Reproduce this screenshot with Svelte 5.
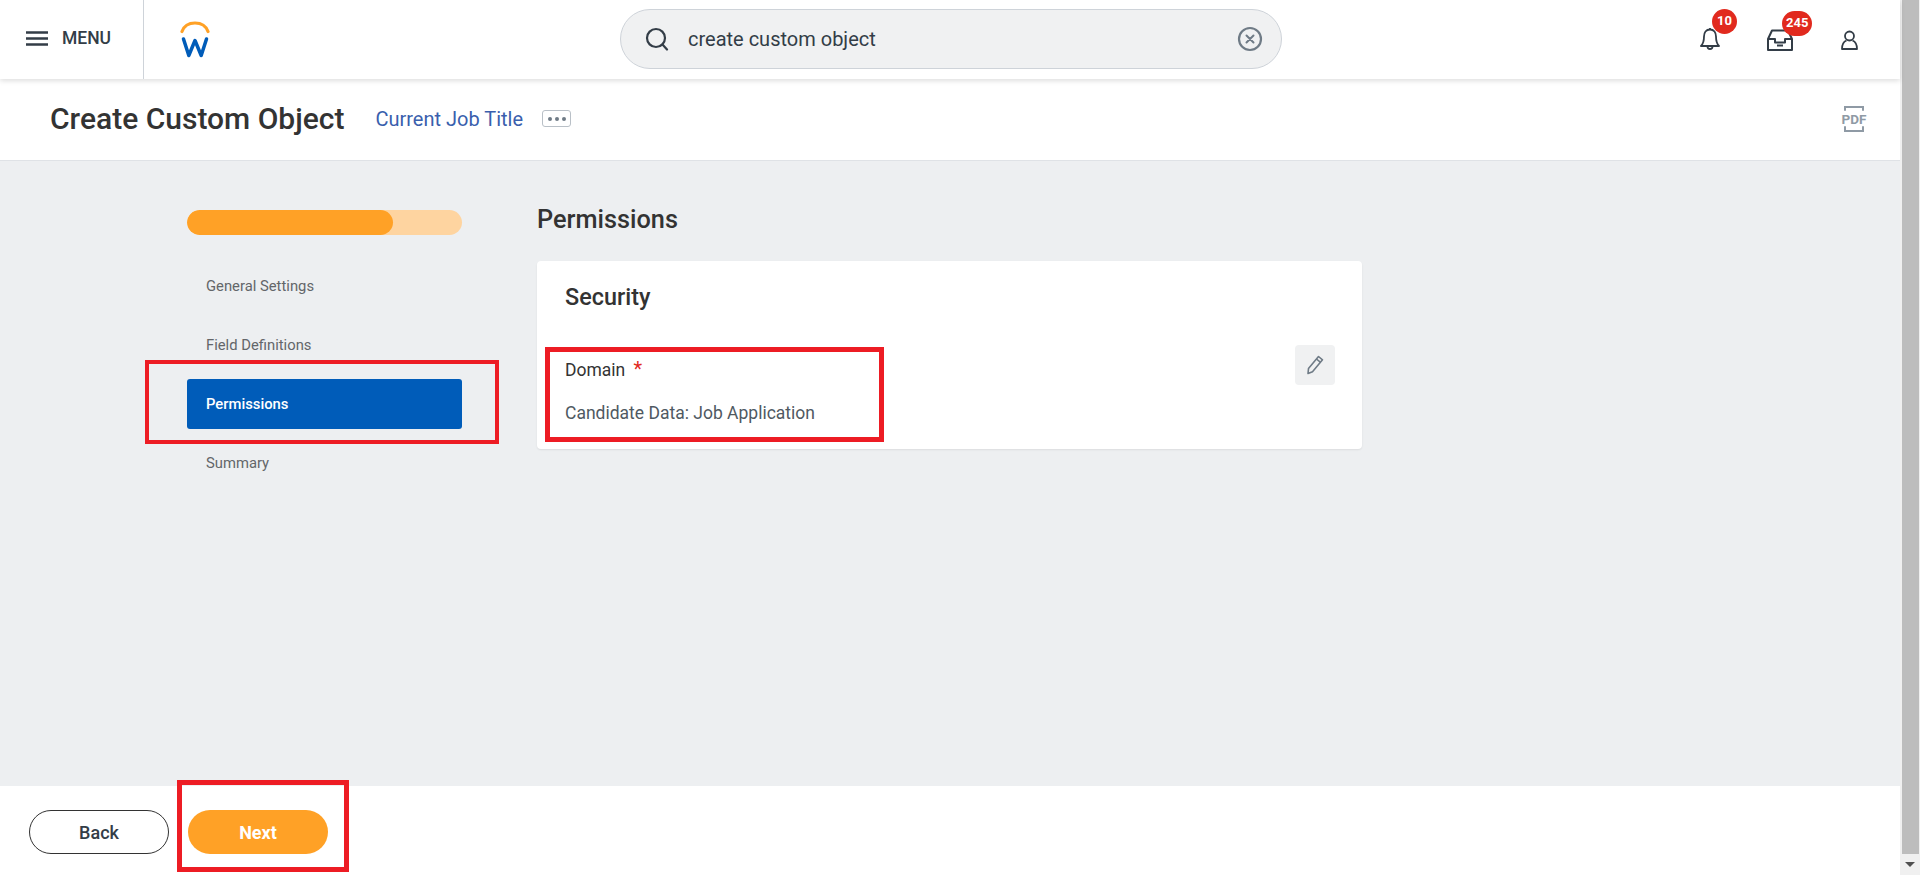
<script lang="ts">
	const steps = ['General Settings', 'Field Definitions', 'Permissions', 'Summary'];
	const active = 'Permissions';
	const progress = 75;
</script>

<div class="window">
	<div class="page">
		<header class="topbar">
			<button class="menu">
				<svg width="22" height="15" viewBox="0 0 22 15">
					<path d="M0 1.5h22M0 7.5h22M0 13.5h22" stroke="#333d47" stroke-width="2.4" />
				</svg>
				<span>MENU</span>
			</button>
			<div class="logo">
				<svg width="30" height="37" viewBox="0 0 30 37" fill="none">
					<path d="M2 10.5C4 5 9 2 15 2s11 3 13 8.500" stroke="#ffa126" stroke-width="3.200" stroke-linecap="round" />
					<path d="M3.500 18 8.800 34.500 15 19.500l6.200 15 5.300-16.500" stroke="#005cb9" stroke-width="3.500" stroke-linejoin="round" stroke-linecap="round" />
				</svg>
			</div>
			<div class="search">
				<svg width="24" height="24" viewBox="0 0 24 24" fill="none" stroke="#333d47" stroke-width="2.200">
					<circle cx="11" cy="11" r="9" />
					<path d="M17.500 17.500 22 22.500" stroke-linecap="round" />
				</svg>
				<span class="query">create custom object</span>
				<svg class="clear" width="26" height="26" viewBox="0 0 26 26" fill="none" stroke="#6f7b86">
					<circle cx="13" cy="13" r="11" stroke-width="2.200" />
					<path d="M9.500 9.500l7 7M16.500 9.500l-7 7" stroke-width="2" stroke-linecap="round" />
				</svg>
			</div>
			<div class="actions">
				<div class="action bell">
					<svg width="20" height="26" viewBox="0 0 20 26" fill="none" stroke="#333d47" stroke-width="1.800" stroke-linejoin="round">
						<path d="M10 2.500c-4 0-6 3-6 7 0 5-1 7.500-3 9.500h18c-2-2-3-4.500-3-9.500 0-4-2-7-6-7z" />
						<path d="M10 1v1.500M7.500 19.500a2.500 2.500 0 0 0 5 0" />
					</svg>
					<span class="badge">10</span>
				</div>
				<div class="action inbox">
					<svg width="26" height="22" viewBox="0 0 26 22" fill="none" stroke="#333d47" stroke-width="2" stroke-linejoin="round">
						<path d="M1 10 5 1.500h16L25 10v11H1z" />
						<path d="M1 10h7v3.500h10V10h7" />
						<path d="M10 16.500h6" />
					</svg>
					<span class="badge">245</span>
				</div>
				<div class="action user">
					<svg width="17" height="20" viewBox="0 0 17 20" fill="none" stroke="#333d47" stroke-width="1.800" stroke-linejoin="round">
						<circle cx="8.500" cy="6" r="4.500" />
						<path d="M5.500 10.500C3 11.500 1 13.500 1 19h15c0-5.500-2-7.500-4.500-8.500" />
					</svg>
				</div>
			</div>
		</header>

		<section class="titlebar">
			<h1>Create Custom Object</h1>
			<a class="job" href="#job">Current Job Title</a>
			<button class="more" aria-label="More"><i></i><i></i><i></i></button>
			<div class="pdf">
				<span>PDF</span>
			</div>
		</section>

		<main class="content">
			<nav class="steps">
				<div class="bar"><div class="fill" style="width: {progress}%"></div></div>
				{#each steps as step}
					<div class="step" class:current={step === active}>
						{step}
						{#if step === active}<div class="mark mark-step"></div>{/if}
					</div>
				{/each}
			</nav>
			<div class="form">
				<h2>Permissions</h2>
				<div class="card">
					<h3>Security</h3>
					<div class="field">
						<div class="field-text">
							<div class="label">Domain <span class="req">*</span></div>
							<div class="value">Candidate Data: Job Application</div>
							<div class="mark mark-field"></div>
						</div>
						<button class="edit" aria-label="Edit">
							<svg width="20" height="20" viewBox="0 0 20 20" fill="none" stroke="#6f7b86" stroke-width="1.600" stroke-linejoin="round">
								<path d="M3 18.500 3.500 13.500 13.500 1.500l4 3.300L7.500 16.700z" />
								<path d="M11.500 4 15.500 7.300" />
							</svg>
						</button>
					</div>
				</div>
			</div>
		</main>

		<footer class="footer">
			<button class="btn back">Back</button>
			<button class="btn next">
				Next
				<div class="mark mark-next"></div>
			</button>
		</footer>
	</div>

	<div class="scrollbar">
		<div class="thumb"></div>
		<div class="arrow"></div>
	</div>
</div>

<style>
	:global(body) {
		font-family: Roboto, 'Liberation Sans', sans-serif;
		color: #333;
	}

	button {
		font-family: inherit;
		background: none;
		border: none;
		padding: 0;
	}

	.window {
		display: flex;
		height: 875px;
		overflow: hidden;
		background: #f0f0f0;
	}

	.page {
		flex: 1;
		display: flex;
		flex-direction: column;
		min-width: 0;
		background: #fff;
	}

	.topbar {
		position: relative;
		z-index: 2;
		flex: 0 0 79px;
		display: flex;
		align-items: stretch;
		background: #fff;
		box-shadow: 0 2px 5px rgba(0, 0, 0, 0.13);
	}

	.menu {
		display: flex;
		align-items: center;
		gap: 14px;
		width: 117px;
		padding: 0 0 3px 26px;
		border-right: 1px solid #ced3d9;
		box-sizing: content-box;
		color: #333d47;
		font-size: 17.5px;
		font-weight: 500;
	}

	.logo {
		display: flex;
		align-items: center;
		margin-left: 36px;
		padding-bottom: 1px;
	}

	.search {
		display: flex;
		align-items: center;
		width: 662px;
		height: 60px;
		margin: 9px 0 0 410px;
		padding: 0 18px 0 24px;
		box-sizing: border-box;
		background: #f0f1f2;
		border: 1px solid #ced3d9;
		border-radius: 30px;
	}

	.query {
		margin-left: 19px;
		font-size: 20px;
		color: #333d47;
	}

	.clear {
		margin-left: auto;
	}

	.actions {
		flex: 1;
		display: flex;
		align-items: center;
		padding: 0 0 0 418px;
	}

	.action {
		position: relative;
		display: flex;
	}

	.inbox {
		margin-left: 47px;
	}

	.user {
		margin-left: 48px;
	}

	.badge {
		position: absolute;
		top: -18px;
		left: 12px;
		min-width: 25px;
		height: 25px;
		padding: 0 4px;
		box-sizing: border-box;
		border-radius: 13px;
		background: #e12a1e;
		color: #fff;
		font-size: 13px;
		font-weight: 700;
		line-height: 24px;
		text-align: center;
	}

	.inbox .badge {
		left: 15px;
	}

	.titlebar {
		flex: 0 0 82px;
		display: flex;
		align-items: center;
		padding: 0 36px 2px 50px;
		box-sizing: border-box;
		background: #fff;
		border-bottom: 1px solid #dfe2e6;
	}

	h1 {
		margin: 0;
		font-size: 30px;
		font-weight: 500;
		color: #333;
	}

	.job {
		margin-left: 31px;
		font-size: 20px;
		color: #3a5fad;
		text-decoration: none;
	}

	.more {
		display: flex;
		align-items: center;
		justify-content: center;
		gap: 3px;
		width: 29px;
		height: 17px;
		margin-left: 19px;
		border: 1px solid #b9c0c7;
		border-radius: 3px;
	}

	.more i {
		width: 4px;
		height: 4px;
		border-radius: 50%;
		background: #6f7b86;
	}

	.pdf {
		margin-left: auto;
		position: relative;
		width: 20px;
		height: 26px;
		display: flex;
		align-items: center;
		justify-content: center;
		border: 2px solid #8f9aa5;
		border-width: 2px 0;
		box-sizing: border-box;
	}

	.pdf::before {
		content: '';
		position: absolute;
		inset: -2px 0;
		border-left: 2px solid #8f9aa5;
		border-right: 2px solid #8f9aa5;
		clip-path: polygon(0 0, 100% 0, 100% 20%, 0 20%, 0 80%, 100% 80%, 100% 100%, 0 100%);
	}

	.pdf span {
		position: relative;
		color: #8f9aa5;
		font-size: 13.500px;
		font-weight: 700;
	}

	.content {
		flex: 1;
		display: flex;
		gap: 75px;
		padding: 49px 0 0 187px;
		background: #edeff1;
	}

	.steps {
		flex: 0 0 275px;
		display: flex;
		flex-direction: column;
		gap: 9px;
	}

	.bar {
		height: 25px;
		margin-bottom: 17px;
		border-radius: 13px;
		background: #fed4a0;
		overflow: hidden;
	}

	.fill {
		height: 100%;
		border-radius: 13px;
		background: #ffa126;
	}

	.step {
		position: relative;
		height: 50px;
		display: flex;
		align-items: center;
		padding-left: 19px;
		border-radius: 3px;
		font-size: 14.8px;
		color: #636669;
	}

	.step.current {
		background: #005cb9;
		color: #fff;
		font-weight: 500;
	}

	.form {
		flex: 0 0 825px;
	}

	h2 {
		margin: 0;
		height: 51px;
		line-height: 20px;
		font-size: 25.300px;
		font-weight: 500;
		color: #333;
	}

	.card {
		height: 188px;
		padding: 18px 27px 0 28px;
		box-sizing: border-box;
		background: #fff;
		border-radius: 4px;
		box-shadow: 0 1px 2px rgba(0, 0, 0, 0.08);
	}

	h3 {
		margin: 0;
		height: 66px;
		line-height: 36px;
		font-size: 23.400px;
		font-weight: 500;
		color: #333;
	}

	.field {
		display: flex;
		justify-content: space-between;
		align-items: flex-start;
	}

	.field-text {
		position: relative;
		padding-top: 11px;
	}

	.label {
		height: 44px;
		line-height: 26px;
		font-size: 17.500px;
		color: #333;
	}

	.req {
		margin-left: 4px;
		color: #e12a1e;
		font-size: 20px;
	}

	.value {
		line-height: 26px;
		font-size: 17.500px;
		color: #4f5962;
	}

	.edit {
		display: flex;
		align-items: center;
		justify-content: center;
		width: 40px;
		height: 40px;
		border-radius: 4px;
		background: #f0f1f2;
	}

	.footer {
		flex: 0 0 89px;
		display: flex;
		gap: 19px;
		padding: 24px 0 0 29px;
		box-sizing: border-box;
		background: #fff;
	}

	.btn {
		position: relative;
		width: 140px;
		height: 44px;
		border-radius: 22px;
		font-size: 18px;
		font-weight: 500;
	}

	.back {
		border: 1px solid #333;
		color: #333d47;
	}

	.next {
		background: #ffa126;
		color: #fff;
		font-weight: 700;
	}

	.mark {
		position: absolute;
		border: 4px solid #ed1c24;
		pointer-events: none;
	}

	.mark-step {
		inset: -19px -37px -15px -42px;
	}

	.mark-field {
		inset: 2px -69px -16px -20px;
		border-width: 5px;
	}

	.mark-next {
		inset: -30px -21px -18px -11px;
		border-width: 5px;
	}

	.scrollbar {
		flex: 0 0 20px;
		display: flex;
		flex-direction: column;
		align-items: center;
		background: #f0f0f0;
	}

	.thumb {
		width: 17px;
		height: 854px;
		background: #bdbdbd;
	}

	.arrow {
		margin-top: 8px;
		border-left: 5px solid transparent;
		border-right: 5px solid transparent;
		border-top: 5px solid #505050;
	}
</style>
